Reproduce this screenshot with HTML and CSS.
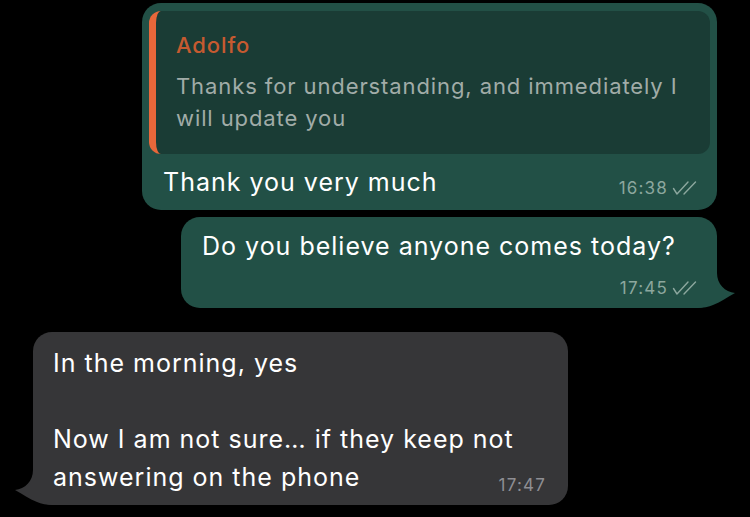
FILE: index.html
```html
<html>
<head>
    <title>Chat</title>
    <meta charset="UTF-8"/>
    <meta name="viewport" content="width=device-width, initial-scale=1.0">
    <link rel="stylesheet" href="styles.css">
</head>
<body>
    <div class="chat">
        <div class="msg out">
            <div class="bubble bubble-reply">
                <div class="quote">
                    <div class="quote-name">Adolfo</div>
                    <div class="quote-text">Thanks for understanding, and immediately I<br>will update you</div>
                </div>
                <div class="line line-reply">
                    <span class="text">Thank you very much</span>
                    <span class="meta">16:38
                        <svg class="ticks" width="25" height="14" viewBox="0 0 25 14"><path d="M1.5 7.5 L5 13 L16 1 M12 13 L23.5 1" fill="none" stroke="currentColor" stroke-width="1.4" stroke-linecap="round" stroke-linejoin="round"/></svg>
                    </span>
                </div>
            </div>
        </div>
        <div class="msg out">
            <div class="bubble bubble-question">
                <div class="text">Do you believe anyone comes today?</div>
                <div class="meta meta-row">17:45
                    <svg class="ticks" width="25" height="14" viewBox="0 0 25 14"><path d="M1.5 7.5 L5 13 L16 1 M12 13 L23.5 1" fill="none" stroke="currentColor" stroke-width="1.4" stroke-linecap="round" stroke-linejoin="round"/></svg>
                </div>
                <svg class="tail" width="38" height="44" viewBox="0 0 38 44"><path d="M0 0 H20 V9 C20 20 28 28 38 29 C30 33 24 38 16 41 C12 43 6 44 0 44 Z"/></svg>
            </div>
        </div>
        <div class="msg in">
            <div class="bubble bubble-answer">
                <div class="line">
                    <span class="text text-tall">In the morning, yes<br><br>Now I am not sure… if they keep not<br>answering on the phone</span>
                    <span class="meta">17:47</span>
                </div>
                <svg class="tail" width="38" height="44" viewBox="0 0 38 44"><path d="M0 0 H20 V9 C20 20 28 28 38 29 C30 33 24 38 16 41 C12 43 6 44 0 44 Z"/></svg>
            </div>
        </div>
    </div>
</body>
</html>
```

FILE: styles.css
```css
html, body {
    margin: 0;
    padding: 0;
    background: #000;
}
body {
    font-family: Inter, "Noto Sans", sans-serif;
    color: #fff;
}
.chat {
    padding: 3px 33px 0 33px;
    display: flex;
    flex-direction: column;
}
.msg {
    display: flex;
}
.msg.out {
    justify-content: flex-end;
}
.msg.in {
    justify-content: flex-start;
}
.msg + .msg {
    margin-top: 7px;
}
.msg.in {
    margin-top: 24px !important;
}
.bubble {
    position: relative;
    box-sizing: border-box;
    border-radius: 19px;
}
.out .bubble {
    background: #225046;
}
.in .bubble {
    background: #363638;
}
.bubble-reply {
    width: 575px;
    padding: 8px 7px 11px 7px;
}
.bubble-question {
    width: 536px;
    padding: 12px 20px 9px 21px;
}
.bubble-answer {
    width: 535px;
    padding: 12px 22px 9px 20px;
}
.quote {
    background: #1a3c35;
    border-left: 7px solid #e8673a;
    border-radius: 12px;
    padding: 19px 20px 20px 20px;
}
.quote-name {
    color: #c65a30;
    font-size: 22px;
    font-weight: 500;
    letter-spacing: 0.9px;
    line-height: 30px;
}
.quote-text {
    margin-top: 10px;
    color: #a1aca8;
    font-size: 22px;
    letter-spacing: 0.9px;
    line-height: 32px;
}
.line {
    display: flex;
    justify-content: space-between;
    align-items: flex-end;
}
.line-reply {
    margin-top: 11px;
    padding: 0 13px 0 14px;
}
.text {
    font-size: 25px;
    letter-spacing: 1px;
    line-height: 34px;
}
.text-tall {
    flex: 1;
    min-width: 0;
    line-height: 38px;
    white-space: nowrap;
}
.meta {
    display: flex;
    align-items: center;
    gap: 4px;
    font-size: 17px;
    letter-spacing: 1.2px;
    line-height: 22px;
    flex-shrink: 0;
}
.out .meta {
    color: #8ca79e;
}
.in .meta {
    color: #8e8e93;
}
.meta-row {
    justify-content: flex-end;
    margin-top: 14px;
}
.ticks {
    display: block;
}
.tail {
    position: absolute;
    bottom: 0;
}
.out .tail {
    right: -18px;
    fill: #225046;
}
.in .tail {
    left: -18px;
    fill: #363638;
    transform: scaleX(-1);
}
```
